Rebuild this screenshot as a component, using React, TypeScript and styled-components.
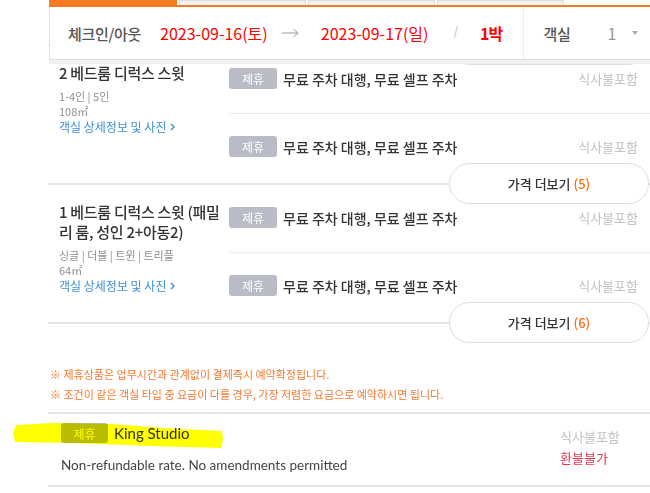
import React from "react";
import styled, { createGlobalStyle } from "styled-components";

const Global = createGlobalStyle`
  * { box-sizing: border-box; }
  html, body { margin: 0; padding: 0; background: #fff; }
  body {
    font-family: "Noto Sans CJK KR", "Noto Sans", sans-serif;
    color: #333;
  }
`;

const Page = styled.div`
  position: relative;
  width: 650px;
  height: 493px;
  overflow: hidden;
  background: #fff;
`;

/* ---------- sticky header ---------- */
const Header = styled.header`
  position: absolute;
  top: 0;
  left: 49px;
  right: 0;
  z-index: 10;
`;

const Tabs = styled.div`
  display: flex;
  align-items: flex-start;
  height: 7px;
  border-bottom: 2px solid #f47b20;
  background: #fff;
`;

const Tab = styled.div<{ $active?: boolean }>`
  width: ${(p) => (p.$active ? 128 : 127)}px;
  height: ${(p) => (p.$active ? 7 : 5)}px;
  margin-left: ${(p) => (p.$active ? 0 : 2)}px;
  margin-bottom: ${(p) => (p.$active ? -2 : 0)}px;
  background: ${(p) => (p.$active ? "#f47b20" : "#f3f3f3")};
  border: ${(p) => (p.$active ? "none" : "1px solid #dedede")};
  border-bottom: none;
`;

const Bar = styled.div`
  display: flex;
  align-items: center;
  height: 53px;
  padding-left: 18px;
  background: #fff;
  border-left: 1px solid #e3e3e3;
  border-bottom: 1px solid #dcdcdc;
`;

const Shade = styled.div`
  height: 4px;
  background: #eef0f3;
`;

const BarLabel = styled.span`
  font-size: 15px;
  font-weight: 500;
  color: #555;
  letter-spacing: -0.02em;
`;

const DateText = styled.span<{ $ml: number }>`
  font-size: 16px;
  color: #f00;
  margin-left: ${(p) => p.$ml}px;
`;

const Nights = styled.span`
  font-size: 16px;
  font-weight: 700;
  color: #f00;
  letter-spacing: -0.05em;
  margin-left: 22px;
`;

const Slash = styled.span`
  font-size: 16px;
  color: #cfcfcf;
  margin-left: 25px;
  font-family: "Liberation Sans", sans-serif;
`;

const ArrowIcon = styled.svg`
  margin-left: 14px;
  width: 17px;
  height: 10px;
  flex: none;
`;

const RoomPick = styled.div`
  display: flex;
  align-items: center;
  align-self: stretch;
  margin-left: 21px;
  padding-left: 19px;
  border-left: 1px solid #ececec;
`;

const Count = styled.span`
  font-size: 16px;
  color: #999;
  margin-left: 37px;
`;

const Caret = styled.span`
  margin-left: 16px;
  width: 0;
  height: 0;
  border-left: 3.5px solid transparent;
  border-right: 3.5px solid transparent;
  border-top: 4px solid #aaa;
`;

/* ---------- room list ---------- */
const List = styled.div`
  margin-left: 48px;
`;

const Stub = styled.div`
  position: relative;
  height: 46px;
  border-bottom: 2px solid #e6e6e6;
`;

const Room = styled.div`
  position: relative;
  display: flex;
  border-bottom: 2px solid #e6e6e6;
`;

const RoomInfo = styled.div`
  width: 181px;
  flex: none;
  padding: 17px 0 0 11px;
`;

const RoomTitle = styled.div`
  font-size: 15px;
  font-weight: 500;
  line-height: 20px;
  color: #333;
  letter-spacing: -0.02em;
`;

const Spec = styled.div<{ $first?: boolean }>`
  font-size: 11px;
  line-height: 15px;
  color: #8f8f8f;
  margin-top: ${(p) => (p.$first ? 6 : 0)}px;
`;

const DetailLink = styled.a`
  display: flex;
  align-items: center;
  gap: 4px;
  font-size: 12px;
  line-height: 15px;
  color: #3f8ed8;
  text-decoration: none;
`;

const Plans = styled.div`
  flex: 1;
`;

const PlanRow = styled.div<{ $h: number; $divider?: boolean }>`
  height: ${(p) => p.$h}px;
  padding: 22px 12px 0 0;
  border-bottom: ${(p) => (p.$divider ? "1px solid #ececec" : "none")};
`;

const PlanLine = styled.div`
  display: flex;
  align-items: center;
  height: 21px;
`;

const Badge = styled.span<{ $w?: number; $h?: number }>`
  display: inline-flex;
  align-items: center;
  justify-content: center;
  flex: none;
  width: ${(p) => p.$w ?? 48}px;
  height: ${(p) => p.$h ?? 21}px;
  border-radius: 3px;
  background: #b9bcc6;
  color: #fff;
  font-size: 12px;
`;

const PlanName = styled.span`
  margin-left: 6px;
  font-size: 14px;
  font-weight: 500;
  color: #333;
`;

const Meal = styled.span`
  margin-left: auto;
  font-size: 13px;
  color: #c2c2c2;
`;

const MoreButton = styled.button`
  position: absolute;
  right: 1px;
  bottom: -21px;
  z-index: 2;
  width: 200px;
  height: 41px;
  display: flex;
  align-items: center;
  justify-content: center;
  background: #fff;
  border: 1px solid #dedede;
  border-radius: 21px;
  font-family: inherit;
  font-size: 13px;
  font-weight: 500;
  color: #333;
  padding: 0;
`;

const Orange = styled.span`
  color: #ff6a13;
  margin-left: 3px;
`;

/* ---------- notes ---------- */
const Notes = styled.div`
  margin: 40px 0 0 50px;
`;

const Note = styled.div`
  font-size: 11px;
  line-height: 20px;
  color: #f7782f;
`;

/* ---------- plan block ---------- */
const PlanBlock = styled.div`
  display: flex;
  margin: 8px 0 0 48px;
  padding: 9px 0 10px 13px;
  border-top: 2px solid #e6e6e6;
  border-bottom: 2px solid #e6e6e6;
`;

const PlanMain = styled.div`
  flex: 1;
`;

const PlanHead = styled.div`
  display: flex;
  align-items: center;
  height: 20px;
`;

const EnTitle = styled.span`
  margin-left: 6px;
  font-family: Lato, "Noto Sans", sans-serif;
  font-size: 15px;
  color: #333;
`;

const EnDesc = styled.div`
  margin-top: 12px;
  font-family: Lato, "Noto Sans", sans-serif;
  font-size: 13.5px;
  line-height: 20px;
  color: #444;
`;

const PlanSide = styled.div`
  width: 90px;
  flex: none;
  padding-top: 3px;
`;

const SideText = styled.div<{ $red?: boolean }>`
  font-size: 13px;
  line-height: 21px;
  color: ${(p) => (p.$red ? "#e8364d" : "#c2c2c2")};
`;

const Highlight = styled.svg`
  position: absolute;
  left: 12px;
  top: 420px;
  width: 214px;
  height: 30px;
  mix-blend-mode: multiply;
  z-index: 5;
  pointer-events: none;
`;

const Chevron = () => (
  <svg width="5" height="8" viewBox="0 0 5 8">
    <path d="M1 1l3 3-3 3" fill="none" stroke="#3f8ed8" strokeWidth="1.4" />
  </svg>
);

type Plan = { name: string; meal: string };

const RoomCard: React.FC<{ title: string; specs: string[]; plans: Plan[]; more: number }> = ({
  title,
  specs,
  plans,
  more,
}) => (
  <Room>
    <RoomInfo>
      <RoomTitle>{title}</RoomTitle>
      {specs.map((s, i) => (
        <Spec key={i} $first={i === 0}>
          {s}
        </Spec>
      ))}
      <DetailLink>
        객실 상세정보 및 사진 <Chevron />
      </DetailLink>
    </RoomInfo>
    <Plans>
      {plans.map((p, i) => (
        <PlanRow key={i} $h={i === 0 ? 68 : 69} $divider={i < plans.length - 1}>
          <PlanLine>
            <Badge>제휴</Badge>
            <PlanName>{p.name}</PlanName>
            <Meal>{p.meal}</Meal>
          </PlanLine>
        </PlanRow>
      ))}
    </Plans>
    <MoreButton>
      가격 더보기<Orange>({more})</Orange>
    </MoreButton>
  </Room>
);

const parking = "무료 주차 대행, 무료 셀프 주차";

export default function App() {
  return (
    <Page>
      <Global />
      <Header>
        <Tabs>
          <Tab $active />
          <Tab />
          <Tab />
          <Tab />
        </Tabs>
        <Bar>
          <BarLabel>체크인/아웃</BarLabel>
          <DateText $ml={19}>2023-09-16(토)</DateText>
          <ArrowIcon viewBox="0 0 17 10">
            <path d="M0 5h16M11.5 1l4.5 4-4.5 4" fill="none" stroke="#9a9a9a" strokeWidth="1" />
          </ArrowIcon>
          <DateText $ml={22}>2023-09-17(일)</DateText>
          <Slash>/</Slash>
          <Nights>1박</Nights>
          <RoomPick>
            <BarLabel>객실</BarLabel>
            <Count>1</Count>
            <Caret />
          </RoomPick>
        </Bar>
        <Shade />
      </Header>

      <List>
        <Stub>
          <MoreButton aria-hidden="true" />
        </Stub>
        <RoomCard
          title="2 베드룸 디럭스 스윗"
          specs={["1-4인 | 5인", "108㎡"]}
          plans={[
            { name: parking, meal: "식사불포함" },
            { name: parking, meal: "식사불포함" },
          ]}
          more={5}
        />
        <RoomCard
          title="1 베드룸 디럭스 스윗 (패밀리 룸, 성인 2+아동2)"
          specs={["싱글 | 더블 | 트윈 | 트리플", "64㎡"]}
          plans={[
            { name: parking, meal: "식사불포함" },
            { name: parking, meal: "식사불포함" },
          ]}
          more={6}
        />
      </List>

      <Notes>
        <Note>※ 제휴상품은 업무시간과 관계없이 결제즉시 예약확정됩니다.</Note>
        <Note>※ 조건이 같은 객실 타입 중 요금이 다를 경우, 가장 저렴한 요금으로 예약하시면 됩니다.</Note>
      </Notes>

      <PlanBlock>
        <PlanMain>
          <PlanHead>
            <Badge $w={47} $h={20}>제휴</Badge>
            <EnTitle>King Studio</EnTitle>
          </PlanHead>
          <EnDesc>Non-refundable rate. No amendments permitted</EnDesc>
        </PlanMain>
        <PlanSide>
          <SideText>식사불포함</SideText>
          <SideText $red>환불불가</SideText>
        </PlanSide>
      </PlanBlock>

      <Highlight viewBox="0 0 214 30">
        <path
          d="M4 5 L40 3 L100 4 L150 8 L210 11 L211 20 L209 28 L140 26 L60 23 L3 22 L1 13 Z"
          fill="#ffff00"
        />
      </Highlight>
    </Page>
  );
}
